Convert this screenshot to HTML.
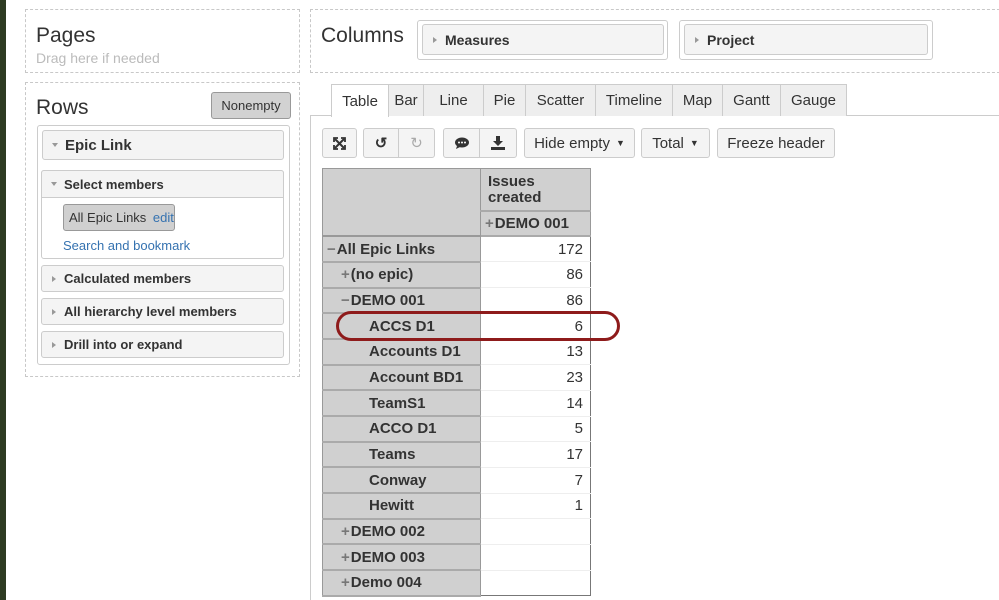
<!DOCTYPE html>
<html><head><meta charset="utf-8"><style>
*{box-sizing:border-box;margin:0;padding:0}
body{width:999px;height:600px;overflow:hidden;background:#fff;font-family:"Liberation Sans",Arial,sans-serif;color:#333;position:relative}
.a{position:absolute}
.dash{border:1px dashed #c8c8c8}
.h{font-size:21px;color:#333}
.btn{position:absolute;border:1px solid #ccc;border-radius:3px;background:#f4f4f4;font-size:15px;display:flex;align-items:center;justify-content:center;color:#333}
.sec{position:absolute;left:41px;width:243px;border:1px solid #ccc;border-radius:3px;background:#f4f4f4;font-size:13px;font-weight:bold;color:#333;padding-left:22px;display:flex;align-items:center}
.tri{position:absolute;left:10px;top:50%;margin-top:-3px;width:0;height:0;border-left:4px solid #999;border-top:3px solid transparent;border-bottom:3px solid transparent}
.trid{position:absolute;left:9px;top:50%;margin-top:-2px;width:0;height:0;border-top:4px solid #999;border-left:3.5px solid transparent;border-right:3.5px solid transparent}
.tab{position:absolute;top:84px;height:32px;border:1px solid #ccc;border-bottom:none;background:#eee;font-size:15px;display:flex;align-items:center;justify-content:center;color:#333}
table{border-collapse:collapse;position:absolute;left:322px;top:168px;font-size:15px}
td{height:25.7px;padding:0 7px;white-space:nowrap}
td.l{background:#d0d0d0;border:1px solid #999;border-bottom:2px solid #aaa;font-weight:bold;width:158px}
td.v{background:#fff;text-align:right;border-left:1px solid #777;border-right:1px solid #777;border-bottom:1px solid #eee;width:110px}
.pm{color:#777;font-weight:bold;margin-right:1px}
</style></head><body>
<div class="a" style="left:0;top:0;width:6px;height:600px;background:#2d3b22"></div>

<div class="a dash" style="left:25px;top:9px;width:275px;height:64px"></div>
<div class="a h" style="left:36px;top:24px">Pages</div>
<div class="a" style="left:36px;top:50px;font-size:14px;color:#bbb">Drag here if needed</div>

<div class="a dash" style="left:25px;top:82px;width:275px;height:295px"></div>
<div class="a h" style="left:36px;top:96px">Rows</div>
<div class="btn" style="left:211px;top:92px;width:80px;height:27px;background:#d2d2d2;border-color:#999;font-size:13px">Nonempty</div>
<div class="a" style="left:37px;top:125px;width:253px;height:240px;border:1px solid #ccc;border-radius:3px"></div>
<div class="sec" style="left:42px;top:130px;width:242px;height:30px;font-size:15px"><span class="trid"></span>Epic Link</div>
<div class="a" style="left:41px;top:170px;width:243px;height:89px;border:1px solid #ccc;border-radius:3px"></div>
<div class="sec" style="top:170px;height:28px;border-radius:3px 3px 0 0"><span class="trid"></span>Select members</div>
<div class="a" style="left:63px;top:204px;width:112px;height:27px;background:#d0d0d0;border:1px solid #999;border-radius:3px;font-size:13px;padding:5px 0 0 5px">All Epic Links <span style="color:#3572b0;margin-left:3px">edit</span></div>
<div class="a" style="left:63px;top:238px;font-size:13px;color:#3572b0">Search and bookmark</div>
<div class="sec" style="top:265px;height:27px"><span class="tri"></span>Calculated members</div>
<div class="sec" style="top:298px;height:27px"><span class="tri"></span>All hierarchy level members</div>
<div class="sec" style="top:331px;height:27px"><span class="tri"></span>Drill into or expand</div>

<div class="a dash" style="left:310px;top:9px;width:700px;height:64px"></div>
<div class="a h" style="left:321px;top:24px">Columns</div>
<div class="a" style="left:417px;top:20px;width:251px;height:40px;border:1px solid #ccc;border-radius:3px"></div>
<div class="sec" style="left:422px;top:24px;width:242px;height:31px;font-size:14px"><span class="tri"></span>Measures</div>
<div class="a" style="left:679px;top:20px;width:254px;height:40px;border:1px solid #ccc;border-radius:3px"></div>
<div class="sec" style="left:684px;top:24px;width:244px;height:31px;font-size:14px"><span class="tri"></span>Project</div>

<div class="a" style="left:310px;top:115px;width:689px;height:485px;border-top:1px solid #ccc;border-left:1px solid #ccc"></div>
<div class="tab" style="left:331px;width:58px;background:#fff;height:33px">Table</div>
<div class="tab" style="left:388px;width:36px">Bar</div>
<div class="tab" style="left:423px;width:61px">Line</div>
<div class="tab" style="left:483px;width:43px">Pie</div>
<div class="tab" style="left:525px;width:71px">Scatter</div>
<div class="tab" style="left:595px;width:78px">Timeline</div>
<div class="tab" style="left:672px;width:51px">Map</div>
<div class="tab" style="left:722px;width:59px">Gantt</div>
<div class="tab" style="left:780px;width:67px">Gauge</div>

<div class="btn" style="left:322px;top:128px;width:35px;height:30px"><svg width="13" height="13" stroke="#333" stroke-width="2" fill="none"><path d="M2 2L11 11M11 2L2 11"/><path d="M1 5V1H5M8 1H12V5M12 8V12H8M5 12H1V8" stroke-width="1.8"/></svg></div>
<div class="btn" style="left:363px;top:128px;width:36px;height:30px;border-radius:3px 0 0 3px;font-weight:bold">↺</div>
<div class="btn" style="left:398px;top:128px;width:37px;height:30px;border-radius:0 3px 3px 0;color:#aaa">↻</div>
<div class="btn" style="left:443px;top:128px;width:37px;height:30px;border-radius:3px 0 0 3px"><svg width="14" height="12"><ellipse cx="7" cy="5.5" rx="7" ry="5" fill="#333"/><path d="M2 9 L1 12 L5 10z" fill="#333"/><circle cx="4" cy="5.5" r="1" fill="#fff"/><circle cx="7" cy="5.5" r="1" fill="#fff"/><circle cx="10" cy="5.5" r="1" fill="#fff"/></svg></div>
<div class="btn" style="left:479px;top:128px;width:38px;height:30px;border-radius:0 3px 3px 0"><svg width="14" height="14"><path d="M5 0h4v5h3l-5 5-5-5h3z" fill="#333"/><rect x="0" y="11" width="14" height="3" fill="#333"/></svg></div>
<div class="btn" style="left:524px;top:128px;width:111px;height:30px">Hide empty <span style="font-size:9px;margin-left:6px">▼</span></div>
<div class="btn" style="left:641px;top:128px;width:69px;height:30px">Total <span style="font-size:9px;margin-left:6px">▼</span></div>
<div class="btn" style="left:717px;top:128px;width:118px;height:30px">Freeze header</div>

<table>
<tr><td class="l" rowspan="2" style="border-bottom:2px solid #999"></td><td class="l" style="height:42px;width:110px;line-height:16px;vertical-align:top;padding-top:5px">Issues<br>created</td></tr>
<tr><td class="l" style="width:110px;padding-left:4px"><span class="pm">+</span>DEMO 001</td></tr>
<tr><td class="l" style="padding-left:4px"><span class="pm">−</span>All Epic Links</td><td class="v">172</td></tr>
<tr><td class="l" style="padding-left:18px"><span class="pm">+</span>(no epic)</td><td class="v">86</td></tr>
<tr><td class="l" style="padding-left:18px"><span class="pm">−</span>DEMO 001</td><td class="v">86</td></tr>
<tr><td class="l" style="padding-left:46px">ACCS D1</td><td class="v">6</td></tr>
<tr><td class="l" style="padding-left:46px">Accounts D1</td><td class="v">13</td></tr>
<tr><td class="l" style="padding-left:46px">Account BD1</td><td class="v">23</td></tr>
<tr><td class="l" style="padding-left:46px">TeamS1</td><td class="v">14</td></tr>
<tr><td class="l" style="padding-left:46px">ACCO D1</td><td class="v">5</td></tr>
<tr><td class="l" style="padding-left:46px">Teams</td><td class="v">17</td></tr>
<tr><td class="l" style="padding-left:46px">Conway</td><td class="v">7</td></tr>
<tr><td class="l" style="padding-left:46px">Hewitt</td><td class="v">1</td></tr>
<tr><td class="l" style="padding-left:18px"><span class="pm">+</span>DEMO 002</td><td class="v"></td></tr>
<tr><td class="l" style="padding-left:18px"><span class="pm">+</span>DEMO 003</td><td class="v"></td></tr>
<tr><td class="l" style="padding-left:18px"><span class="pm">+</span>Demo 004</td><td class="v" style="border-bottom:1px solid #777"></td></tr>
</table>
<div class="a" style="left:336px;top:311px;width:284px;height:30px;border:3px solid #8e1b1b;border-radius:15px"></div>
</body></html>
